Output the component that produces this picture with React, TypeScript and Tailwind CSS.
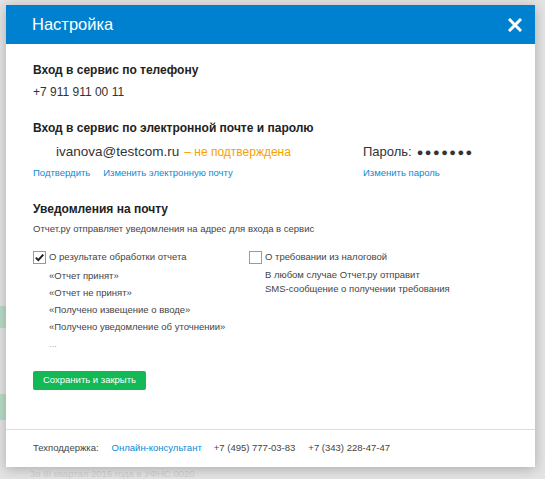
import React from "react";

function CheckBox({ checked }: { checked?: boolean }) {
  return (
    <span className="relative inline-flex h-[13px] w-[13px] shrink-0 items-center justify-center border border-[#9a9a9a] bg-white">
      {checked && (
        <svg width="11" height="11" viewBox="0 0 11 11" className="block">
          <path d="M1.8 5.6 L4.3 8.1 L9.3 2.6" fill="none" stroke="#222" strokeWidth="2" />
        </svg>
      )}
    </span>
  );
}

export default function App() {
  return (
    <div
      className="relative h-[479px] w-[545px] overflow-hidden bg-[#e4e4e4]"
      style={{ fontFamily: '"Liberation Sans", Arial, sans-serif' }}
    >
      {/* faint page behind */}
      <div className="absolute left-0 top-[306px] h-[22px] w-[6px] bg-[#b9dcc8]" />
      <div className="absolute left-0 top-[394px] h-[26px] w-[6px] bg-[#b9dcc8]" />
      <div className="absolute left-[30px] top-[468px] text-[9.5px] leading-[11px] text-[#cfcfcf]">
        3а III квартал 2016 года в УФНС 0020
      </div>

      <div className="absolute left-[6px] top-[5px] w-[529px] bg-white shadow-[0_2px_12px_rgba(0,0,0,0.25)]">
        <div className="flex h-[39px] items-center justify-between bg-[#0081cf] pl-[26px] pr-[13px]">
          <span className="text-[16.5px] text-white">Настройка</span>
          <svg width="14" height="14" viewBox="0 0 14 14">
            <path d="M2 2 L12 12 M12 2 L2 12" stroke="#fff" strokeWidth="3" strokeLinecap="square" />
          </svg>
        </div>

        <div className="pl-[27px] pr-[20px] pt-[18px] pb-[39px] text-[#222]">
          <div className="text-[12px] font-bold leading-[16px]">Вход в сервис по телефону</div>
          <div className="mt-[6px] text-[12px] leading-[16px] text-[#333]">+7 911 911 00 11</div>

          <div className="mt-[20px] text-[12px] font-bold leading-[16px]">Вход в сервис по электронной почте и паролю</div>

          <div className="mt-[7px] flex h-[18px] items-center leading-[18px]">
            <div className="flex w-[330px] items-center pl-[23px]">
              <span className="text-[13.5px] text-[#333]">ivanova@testcom.ru</span>
              <span className="ml-[5px] text-[12px] text-[#f5a200]">– не подтверждена</span>
            </div>
            <div className="flex items-center text-[13px] text-[#333]">
              <span>Пароль:</span>
              <span className="ml-[5px] text-[11px] tracking-[1.5px]">●●●●●●●</span>
            </div>
          </div>

          <div className="mt-[5px] flex text-[9.5px] leading-[14px] text-[#0a8ad2]">
            <div className="flex w-[330px]">
              <span>Подтвердить</span>
              <span className="ml-[13px]">Изменить электронную почту</span>
            </div>
            <span>Изменить пароль</span>
          </div>

          <div className="mt-[21px] text-[12px] font-bold leading-[16px]">Уведомления на почту</div>
          <div className="mt-[5px] text-[9.5px] leading-[14px] text-[#444]">
            Отчет.ру отправляет уведомления на адрес для входа в сервис
          </div>

          <div className="mt-[13px] flex text-[9.5px] text-[#444]">
            <div className="w-[216px]">
              <div className="flex h-[16px] items-center gap-[3px]">
                <CheckBox checked />
                <span className="leading-[16px]">О результате обработки отчета</span>
              </div>
              <div className="mt-[1.5px] pl-[16px] leading-[17px]">
                <div>«Отчет принят»</div>
                <div>«Отчет не принят»</div>
                <div>«Получено извещение о вводе»</div>
                <div>«Получено уведомление об уточнении»</div>
                <div className="text-[#aaa]">...</div>
              </div>
            </div>
            <div>
              <div className="flex h-[16px] items-center gap-[3px]">
                <CheckBox />
                <span className="leading-[16px]">О требовании из налоговой</span>
              </div>
              <div className="mt-[3px] pl-[16px] leading-[14px]">
                <div>В любом случае Отчет.ру отправит</div>
                <div>SMS-сообщение о получении требования</div>
              </div>
            </div>
          </div>

          <button className="mt-[19px] flex h-[19px] items-center rounded-[2px] bg-[#12b955] px-[10px] text-[9.5px] text-white">
            Сохранить и закрыть
          </button>
        </div>

        <div className="flex h-[38px] items-center border-t border-[#dedede] pl-[27px] text-[9.5px] text-[#444]">
          <span>Техподдержка:</span>
          <span className="ml-[13px] text-[#0a8ad2]">Онлайн-консультант</span>
          <span className="ml-[12px]">+7 (495) 777-03-83</span>
          <span className="ml-[13px]">+7 (343) 228-47-47</span>
        </div>
      </div>
    </div>
  );
}
